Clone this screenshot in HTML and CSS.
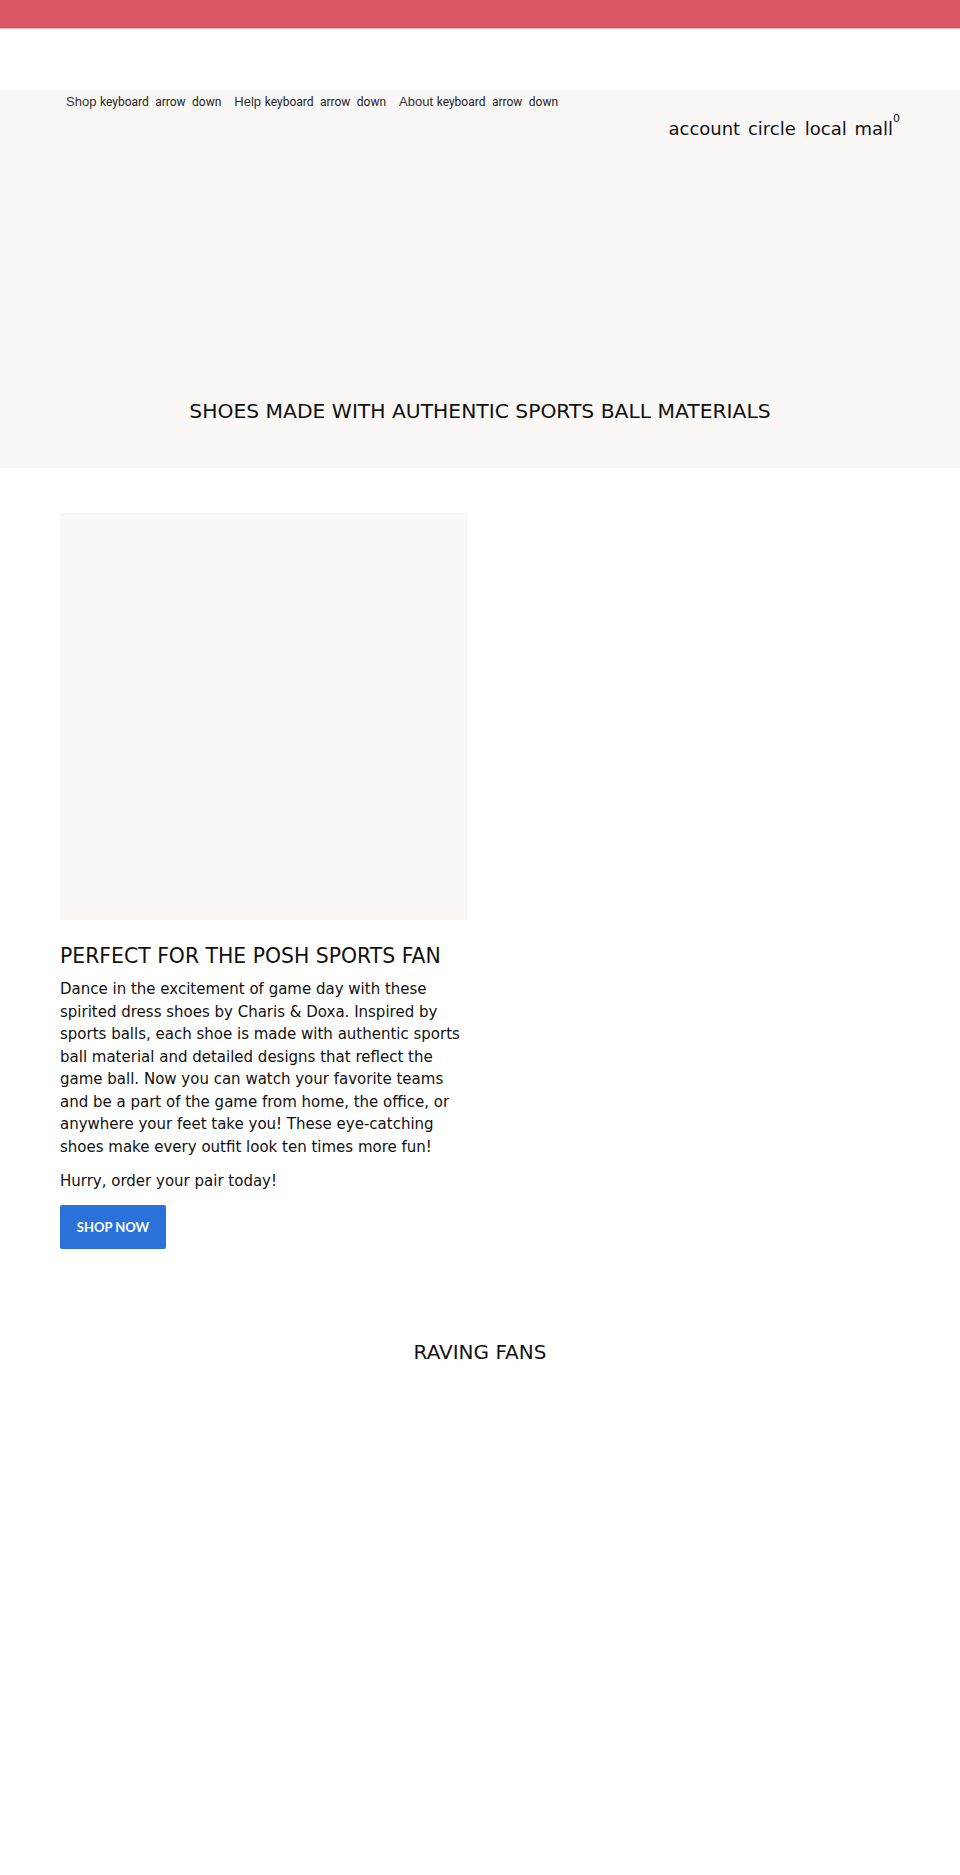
FILE: index.html
```html
<!DOCTYPE html>
<html lang="en">
<head>
    <meta charset="UTF-8">
    <meta name="viewport" content="width=device-width, initial-scale=1.0">
    <title>Charis &amp; Doxa</title>
    <link rel="stylesheet" href="styles.css">
</head>
<body>
    <div class="promo-bar"></div>
    <header class="site-header"></header>

    <section class="hero">
        <nav class="main-nav">
            <a href="#">Shop <span class="icon-text">keyboard arrow down</span></a>
            <a href="#">Help <span class="icon-text">keyboard arrow down</span></a>
            <a href="#">About <span class="icon-text">keyboard arrow down</span></a>
        </nav>
        <div class="account-links">
            <a href="#">account circle</a>
            <a href="#" class="cart">local mall<sup>0</sup></a>
        </div>
        <h1 class="hero-title">SHOES MADE WITH AUTHENTIC SPORTS BALL MATERIALS</h1>
    </section>

    <section class="feature">
        <div class="feature-image"></div>
        <h2>PERFECT FOR THE POSH SPORTS FAN</h2>
        <p>Dance in the excitement of game day with these spirited dress shoes by Charis &amp; Doxa. Inspired by sports balls, each shoe is made with authentic sports ball material and detailed designs that reflect the game ball. Now you can watch your favorite teams and be a part of the game from home, the office, or anywhere your feet take you! These eye-catching shoes make every outfit look ten times more fun!</p>
        <p>Hurry, order your pair today!</p>
        <a href="#" class="btn-shop">SHOP NOW</a>
    </section>

    <section class="reviews">
        <h2>RAVING FANS</h2>
    </section>
</body>
</html>
```

FILE: styles.css
```css
body {
    margin: 0;
    font-family: "DejaVu Sans", sans-serif;
    color: #111;
    background: #fff;
}
a {
    color: inherit;
    text-decoration: none;
}
.promo-bar {
    height: 27px;
    background-color: #dc5766;
    border-bottom: 1px solid #c0505c;
    box-shadow: 0 1px 0 #f4b9c0;
}
.site-header {
    height: 62px;
}
.hero {
    background-color: #f9f8f7;
    height: 378px;
    padding: 0 60px;
    box-sizing: border-box;
    display: flex;
    flex-direction: column;
}
.main-nav {
    display: flex;
    gap: 13px;
    padding: 3px 0 0 6px;
    font-family: "Liberation Sans", Arial, sans-serif;
    font-size: 13px;
    color: #333;
    line-height: 17px;
}
.icon-text {
    font-family: Roboto, sans-serif;
    font-size: 12px;
    word-spacing: 3.5px;
    color: #222;
}
.account-links {
    display: flex;
    justify-content: flex-end;
    align-items: baseline;
    gap: 9px;
    font-size: 18px;
    line-height: 22px;
    word-spacing: 2px;
    margin-top: 7px;
}
.cart sup {
    font-size: 11px;
    line-height: 0;
    vertical-align: 13px;
}
.hero-title {
    margin: auto 0 45px;
    text-align: center;
    font-weight: normal;
    font-size: 20.3px;
}
.feature {
    width: 407px;
    padding: 45px 0 0 60px;
}
.feature-image {
    height: 407px;
    background-color: #f9f8f7;
}
.feature h2 {
    font-weight: normal;
    font-size: 20.4px;
    margin: 24px 0 10px;
}
.feature p {
    font-size: 15px;
    line-height: 22.5px;
    margin: 0 0 12px;
}
.btn-shop {
    display: inline-block;
    width: 106px;
    height: 44px;
    line-height: 44px;
    text-align: center;
    background-color: #2a72d9;
    color: #fff;
    border-radius: 2px;
    font-family: Lato, sans-serif;
    font-weight: bold;
    font-size: 13px;
}
.reviews {
    padding: 91px 0 0;
    height: 500px;
}
.reviews h2 {
    margin: 0;
    text-align: center;
    font-weight: normal;
    font-size: 20px;
}
```
